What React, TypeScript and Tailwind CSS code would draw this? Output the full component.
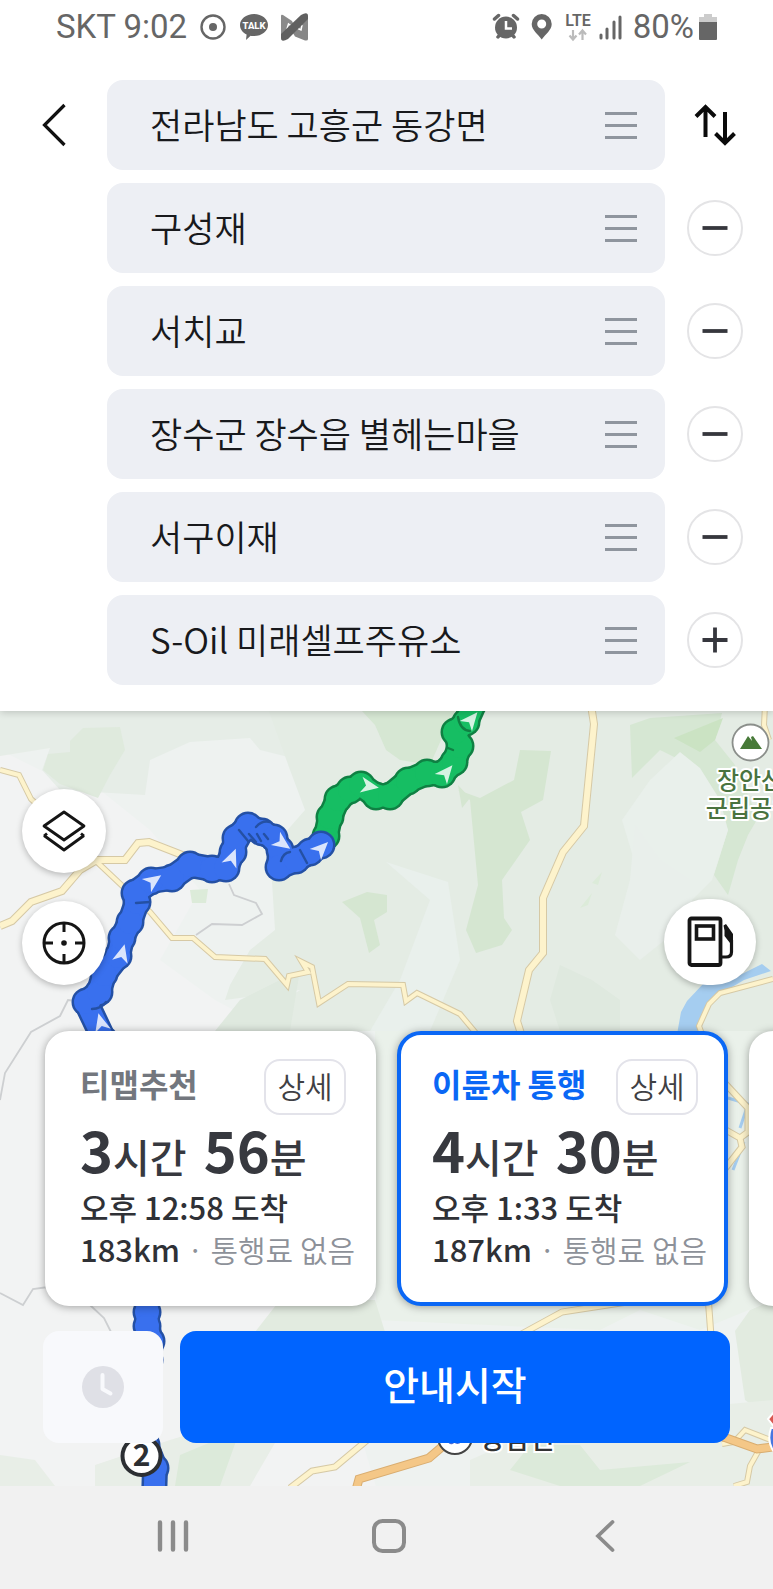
const font = "font-['Noto_Sans_CJK_KR','Noto_Sans',sans-serif]";

const stops = [
  "전라남도 고흥군 동강면",
  "구성재",
  "서치교",
  "장수군 장수읍 별헤는마을",
  "서구이재",
  "S-Oil 미래셀프주유소",
];

const routes = [
  { title: "티맵추천", hours: 3, minutes: 56, arrival: "오후 12:58 도착", distance: "183km", toll: "통행료 없음", selected: false },
  { title: "이륜차 통행", hours: 4, minutes: 30, arrival: "오후 1:33 도착", distance: "187km", toll: "통행료 없음", selected: true },
];

function StatusBar() {
  return (
    <div className="flex h-[54px] items-center justify-between pl-14 pr-[55px] font-[Roboto,sans-serif] text-[33px] leading-8 text-[#666]">
      <div className="flex items-center">
        <span>SKT 9:02</span>
        <svg className="ml-3" width="110" height="30" viewBox="198 11 110 30">
          <circle cx="212" cy="26" r="11.5" fill="none" stroke="#666" strokeWidth="2.4" />
          <circle cx="212" cy="26" r="4" fill="#666" />
          <path d="M253 13c8 0 14 5 14 11s-6 11-14 11c-1.400 0-2.200 0-3.400-.3L245 39l.6-5.500C241.500 31.500 239 28 239 24c0-6 6-11 14-11z" fill="#666" />
          <text x="253" y="28" textAnchor="middle" fontSize="9.500" fontWeight="800" fill="#fff">TALK</text>
          <path d="M280 15q0-2 2-1l9 6 3 6-6 6-8 4z" fill="#8a8a8a" />
          <path d="M307 16v22q0 2-3 1.500l-10-4-3-5 6-7z" fill="#868686" />
          <path d="M286 28l1.500-5 3 2 3.500-3.500M301 24l-1 5-3-1.500" fill="none" stroke="#fff" strokeWidth="1.500" />
          <path d="M280 33l20-19q7-4 7 1v3l-20 20q-7 4-7-1z" fill="#606060" />
        </svg>
      </div>
      <div className="flex items-center">
        <svg width="132" height="30" viewBox="494 11 132 30">
          <g stroke="#666" strokeWidth="3.500" strokeLinecap="round">
            <path d="M497.500 18l4-3.500M520.500 18l-4-3.500M501 36l2-2.500M517 36l-2-2.500" />
          </g>
          <circle cx="509" cy="26.500" r="11" fill="#666" />
          <path d="M509 20v7.500h6" fill="none" stroke="#fff" strokeWidth="2.500" />
          <path fillRule="evenodd" d="M544.700 13a10 10 0 0 1 10 10c0 6-6 10-10 15.500-4-5.500-10-9.500-10-15.500a10 10 0 0 1 10-10zm0 5.500a4.500 4.500 0 1 0 0 9 4.500 4.500 0 0 0 0-9z" fill="#666" />
          <text x="581" y="25" textAnchor="middle" fontSize="16" fontWeight="600" fill="#666">LTE</text>
          <path d="M576 29v9m-3.500-3.500l3.500 4 3.500-4M585.500 39v-9m-3.500 3.500l3.500-4 3.500 4" fill="none" stroke="#bbb" strokeWidth="2.200" />
          <path d="M604 34v3M610 28v9M617 21v16M623 16v21" stroke="#666" strokeWidth="3" strokeLinecap="round" />
        </svg>
        <span className="ml-2.5">80%</span>
        <svg className="ml-1" width="20" height="28" viewBox="0 0 20 28">
          <path d="M6 1h8v3h5v6H1V4h5z" fill="#ccc" />
          <path d="M1 9h18v17q0 1-1 1H2q-1 0-1-1z" fill="#666" />
        </svg>
      </div>
    </div>
  );
}

function StopRow({ name, index }: { name: string; index: number }) {
  const first = index === 0;
  const last = index === stops.length - 1;
  return (
    <li className="flex h-[90px] items-center">
      <div className="w-[107px] shrink-0">
        {first && (
          <button type="button" aria-label="뒤로" className="ml-[34px] flex h-14 w-10 items-center justify-center">
            <svg width="26" height="44" viewBox="0 0 26 44" fill="none" stroke="#111" strokeWidth="3.200">
              <path d="M23.500 2L3.500 22l20 20" />
            </svg>
          </button>
        )}
      </div>
      <div className="flex h-full min-w-0 flex-1 items-center rounded-2xl bg-[#edeff4] pl-[43px] pr-7">
        <input
          aria-label={`경유지 ${index + 1}`}
          defaultValue={name}
          className="h-full min-w-0 flex-1 bg-transparent pb-1 text-[35px] font-[350] text-[#18191c] outline-none"
        />
        <button type="button" aria-label="순서 변경" className="flex h-10 w-8 shrink-0 flex-col justify-center gap-[9px]">
          <span className="h-[3px] w-8 bg-[#8f959e]" />
          <span className="h-[3px] w-8 bg-[#8f959e]" />
          <span className="h-[3px] w-8 bg-[#8f959e]" />
        </button>
      </div>
      <div className="mr-2 flex w-[100px] shrink-0 justify-center">
        {first ? (
          <button type="button" aria-label="출발지 도착지 바꾸기">
            <svg width="42" height="42" viewBox="0 0 42 42" fill="none" stroke="#0b0b0b" strokeWidth="4">
              <path d="M11.500 33V3.500M2 12.500L11.500 3l9.500 9.500M31 8v29.500M21.500 29.500L31 39l9.500-9.500" />
            </svg>
          </button>
        ) : (
          <button
            type="button"
            aria-label={last ? "경유지 추가" : "경유지 삭제"}
            className="flex size-14 items-center justify-center rounded-full border-2 border-[#e4e4e6] bg-white"
          >
            <svg width="26" height="26" viewBox="0 0 26 26" stroke="#36373d" strokeWidth="3.800">
              <path d={last ? "M.5 13h25M13 .5v25" : "M.5 13h25"} />
            </svg>
          </button>
        )}
      </div>
    </li>
  );
}

const blueRoute = [
  [104, 1040], [86, 1002], [99, 992], [104, 974], [118, 956], [122, 938], [130, 922], [137, 902], [135, 893], [151, 881],
  [172, 878], [190, 865], [212, 869], [226, 868], [233, 852], [236, 838], [248, 826], [262, 832], [274, 838], [280, 850],
  [279, 867], [296, 860], [310, 852], [321, 845],
];
const greenRoute = [
  [326, 836], [330, 817], [338, 799], [350, 790], [361, 785], [376, 796], [390, 796], [408, 781], [427, 773], [442, 774],
  [454, 762], [460, 746], [455, 732], [466, 722], [476, 700],
];
const lowerRoute = [[147, 1290], [147, 1312], [147, 1326], [151, 1341], [149, 1360], [145, 1420], [146, 1445], [155, 1468], [154, 1500]];

const arrows = [
  [101, 1023, -15], [122, 954, 15], [153, 881, 55], [232, 858, 22], [282, 843, 125], [321, 849, 45],
  [369, 786, 100], [446, 773, 40], [471, 720, 40],
];

function Route({ points, fill, edge }: { points: number[][]; fill: string; edge: string }) {
  const line = points.map((p) => p.join(",")).join(" ");
  return (
    <g strokeLinejoin="round" strokeLinecap="round">
      <polyline points={line} fill="none" stroke={edge} strokeWidth="26" />
      {points.map(([x, y]) => <circle key={`${x}-${y}`} cx={x} cy={y} r="14.500" fill={edge} />)}
      <polyline points={line} fill="none" stroke={fill} strokeWidth="21" />
      {points.map(([x, y]) => <circle key={`${x}-${y}`} cx={x} cy={y} r="12" fill={fill} />)}
    </g>
  );
}

const yellowRoads = [
  { d: "M0 770L19 775L31 799L45 812", w: 4 },
  { d: "M0 926L12 921L31 902L62 891L80 870L97 860H125L138 843L149 842L190 858", w: 6 },
  { d: "M97 862L150 912L172 938H193L215 957L265 959L287 985L289 976L308 972L302 962L312 967L319 1003L348 984L403 985L406 1001L417 993L460 1014L480 1038", w: 4 },
  { d: "M591 705L594 724L584 826L563 852L543 898V953L529 970L517 1021L523 1040", w: 6 },
  { d: "M773 979L720 993L709 1004L699 1026L706 1045", w: 4 },
  { d: "M765 705L764 725L769 740", w: 4 },
  { d: "M720 1078L748 1108V1132L740 1138L724 1129M748 1132L773 1120M740 1138L742 1147L724 1170", w: 5 },
  { d: "M518 1336L562 1312L640 1300M708 1296L711 1336", w: 5 },
  { d: "M290 1488L312 1471L335 1467L372 1436", w: 5 },
  { d: "M722 1444L734 1442L745 1430L773 1441M759 1450L750 1466L747 1482L734 1486", w: 4 },
];

function MapCanvas() {
  return (
    <svg
      className="absolute inset-0 size-full"
      viewBox="0 711 773 775"
      preserveAspectRatio="xMidYMid slice"
      role="img"
      aria-label="경로 지도"
    >
      <rect x="-400" y="311" width="1600" height="1600" fill="#f2f3f3" />
      <path d="M0 700H773V1500H380L350 1400L300 1340L375 1250L330 1100L290 1040L215 1000L160 960L200 890L150 830L100 790L40 770L0 750z" fill="#eef2f0" />
      <path d="M0 700H285L300 760L260 750L250 738L190 742L150 760L145 795L60 790L42 770L50 748L0 756z" fill="#e6ede7" />
      <path d="M70 741L83 728L120 727L125 750L110 775L98 798L60 784L43 770L48 754L70 752z" fill="#dfeadd" />
      <path d="M265 700H773V1031H240L300 990L225 1000L230 985L250 950L275 930L270 850L305 810L290 770z" fill="#e4ece4" />
      <path d="M362 711H455L441 740L430 765L400 760L386 750L375 725z" fill="#d6e7d3" />
      <path d="M520 750L551 751L543 800L521 812L530 840L502 880L504 918L512 930L502 945L476 953L466 930L478 885L470 800L458 790L480 798L514 780z" fill="#d5e6d1" />
      <path d="M458 785L470 798L462 808zM342 902L367 892L387 895V912L374 920L380 945L369 953L360 918z" fill="#d5e6d1" />
      <path d="M630 725L650 718L722 713L715 740L735 765L758 818L748 835L738 860L728 895L714 875L728 830L700 770L660 750L632 778z" fill="#d6e7d3" />
      <path d="M674 738L723 718L715 740L700 752z" fill="#cbe3c3" />
      <path d="M622 820L650 780L680 752L700 768L720 800L728 830L712 880L692 900L696 940L670 930L640 880z" fill="#e9f0eb" />
      <path d="M386 862L448 882L460 960L430 1031H370L400 980L430 900z" fill="#e9f0ec" />
      <path d="M635 825L660 860L690 880V920L640 960L615 935L630 880z" fill="#e9efeb" />
      <path d="M240 1000L300 970L290 1031H215zM550 1000L560 965L592 980L620 1000V1031H560z" fill="#dfe9df" />
      <path d="M190 890L208 889L206 903H192zM592 883L602 872L598 885zM580 908L592 893L588 905z" fill="#dcebd9" />
      <path d="M375 1031H773V1300L700 1330L640 1310L600 1330L376 1320z" fill="#eaf1ea" />
      <path d="M280 1300H375L385 1332H255zM735 1331L750 1310L773 1300V1420L745 1400z" fill="#e2ebe0" />
      <path d="M0 1455L35 1460L55 1486H0zM95 1465L170 1440L300 1400L250 1486H95zM470 1460L560 1420L773 1400V1486H470z" fill="#e8eee7" />
      <path d="M180 1455L240 1430L220 1486H175zM510 1470L530 1445H580L600 1470L690 1462L640 1486H560z" fill="#dceada" />

      <g fill="none" stroke="#cdcfd1" strokeWidth="1.800">
        <path d="M229 884L234 895L256 903L262 914L242 925L212 924L196 935M76 1001L68 1000L60 1016L31 1032L5 1073L0 1100" />
        <path d="M0 1293L23 1305L33 1289L48 1287M90 1305L104 1318L112 1334" />
      </g>
      <path d="M676 1040L681 1012L687 1001L703 984L740 975L762 964L771 971L744 980L722 993L712 1003L703 1020L700 1040z" fill="#a5cdf0" />
      <path d="M728 1098L748 1104L740 1128M744 1142L733 1170" fill="none" stroke="#a5cdf0" strokeWidth="3" />
      {yellowRoads.map((r) => (
        <path key={r.d} d={r.d} fill="none" stroke="#d6c9a5" strokeWidth={r.w + 2} />
      ))}
      {yellowRoads.map((r) => (
        <path key={r.d} d={r.d} fill="none" stroke="#fdf3cc" strokeWidth={r.w} />
      ))}
      <path d="M356 1490L359 1479L429 1458L450 1440M715 1434L757 1449L773 1447" fill="none" stroke="#d9ad70" strokeWidth="9" />
      <path d="M356 1490L359 1479L429 1458L450 1440M715 1434L757 1449L773 1447" fill="none" stroke="#f4c787" strokeWidth="7" />

      <Route points={greenRoute} fill="#16be63" edge="#0f8043" />
      <Route points={blueRoute} fill="#3970ee" edge="#2450a4" />
      <Route points={lowerRoute} fill="#3970ee" edge="#2450a4" />
      <g fill="none" stroke="#2450a4" strokeWidth="2.400" strokeLinecap="round">
        <path d="M239 830L248 841M249 834L256 842M257 834L261 841M264 834L268 839M256 827Q262 820 270 822M281 861Q283 853 290 852M300 850L307 863M136 903L150 902M92 1009Q101 1009 106 1002" />
      </g>
      <path d="M458 717Q460 730 470 731M448 748L453 750" fill="none" stroke="#0f8043" strokeWidth="2.400" strokeLinecap="round" />
      {arrows.map(([x, y, angle]) => (
        <path key={x} d="M0-10L8 8L0 3L-8 8z" fill="#fff" fillOpacity=".82" transform={`translate(${x} ${y}) rotate(${angle})`} />
      ))}

      <circle cx="750.500" cy="742.500" r="18" fill="#fff" stroke="#8b8f8b" strokeWidth="1.800" />
      <path d="M740 749L748 736L752 741L751 737L753 736L762 749z" fill="#477a38" />
      <g fontSize="24" fontWeight="500" textAnchor="middle" fill="#49733f" stroke="#fff" strokeWidth="4" paintOrder="stroke" strokeLinejoin="round">
        <text x="750" y="789">장안산</text>
        <text x="750" y="817">군립공원</text>
      </g>
      <circle cx="455" cy="1437" r="17" fill="#fff" stroke="#444" strokeWidth="2" />
      <path d="M449 1442q3 3 5-1q3 4 7 0" fill="none" stroke="#4a6cd4" strokeWidth="2" />
      <text x="480" y="1449" fontSize="27" fontWeight="500" fill="#333" stroke="#fff" strokeWidth="4" paintOrder="stroke">장남면</text>
      <circle cx="141.500" cy="1456" r="19" fill="#fff" stroke="#2c2f33" strokeWidth="4" />
      <text x="141.500" y="1466" fontSize="30" fontWeight="700" textAnchor="middle" fill="#2c2f33">2</text>
      <path d="M768 1419L775 1411V1428z" fill="#d95750" stroke="#fff" strokeWidth="2" />
      <path d="M780 1428H771Q765 1446 780 1458z" fill="#4676e0" stroke="#fff" strokeWidth="2" />
    </svg>
  );
}

const roundButton = "flex items-center justify-center rounded-full bg-white shadow-[0_2px_6px_rgba(0,0,0,0.25)]";

function MapControls() {
  return (
    <div className="flex items-end justify-between pl-[22px] pr-[17px]">
      <div className="flex flex-col gap-7">
        <button type="button" aria-label="지도 레이어" className={`${roundButton} size-[84px]`}>
          <svg width="44" height="42" viewBox="0 0 44 42" fill="none" stroke="#151515" strokeWidth="2.800" strokeLinejoin="round">
            <path d="M22 2L42 16L22 30L2 16zM2 26L5 23.500M2 25.500L22 40L42 25.500M42 26L39 23.500" />
          </svg>
        </button>
        <button type="button" aria-label="현재 위치" className={`${roundButton} size-[84px]`}>
          <svg width="44" height="44" viewBox="0 0 44 44" fill="none" stroke="#151515" strokeWidth="3">
            <circle cx="22" cy="22" r="20" />
            <path d="M22 2v9M22 33v9M2 22h9M33 22h9" />
            <circle cx="22" cy="22" r="2.800" fill="#151515" stroke="none" />
          </svg>
        </button>
      </div>
      <button type="button" aria-label="주유소" className={`${roundButton} h-[86px] w-[92px]`}>
        <svg width="48" height="52" viewBox="0 0 48 52" fill="none" stroke="#151515">
          <rect x="3.500" y="2.500" width="31" height="46.500" rx="2" strokeWidth="3.800" />
          <rect x="10.500" y="10" width="17" height="13" strokeWidth="3.600" />
          <path d="M35 41h5q5.500 0 5.500-5V24" strokeWidth="3.200" />
          <path d="M37.500 9.500L40 8l7 10v9h-3l-5.500-7v-5.500z" fill="#151515" stroke="none" />
        </svg>
      </button>
    </div>
  );
}

function RouteCard({ route }: { route: (typeof routes)[number] }) {
  return (
    <li
      className={`h-[275px] w-[331px] shrink-0 rounded-3xl border-4 bg-white pl-[31px] pt-6 shadow-[0_1px_8px_rgba(0,0,0,0.35)] ${
        route.selected ? "border-[#0a67f5]" : "border-white"
      }`}
    >
      <div className="flex items-center justify-between pr-[26px]">
        <h2 className={`pb-2 text-[32px] leading-10 font-bold ${route.selected ? "text-[#0a67f5]" : "text-[#73777e]"}`}>
          {route.title}
        </h2>
        <button type="button" className="h-14 w-[82px] rounded-2xl border-2 border-[#e3e3ea] pb-1 text-[30px] leading-10 font-[350] text-[#3f4044]">
          상세
        </button>
      </div>
      <p className="mt-1 text-[40px] leading-[60px] font-medium text-[#37393f]">
        <b className="text-[56px] font-bold">{route.hours}</b>
        <span className="mr-2">시간</span> <b className="text-[56px] font-bold">{route.minutes}</b>분
      </p>
      <p className="text-[31px] leading-[42px] font-medium text-[#2f3136]">{route.arrival}</p>
      <p className="text-[31px] leading-[42px] font-medium whitespace-nowrap text-[#2f3136]">
        {route.distance} <span className="text-[30px] font-[350] text-[#8d9199]">· {route.toll}</span>
      </p>
    </li>
  );
}

function SystemNav() {
  return (
    <nav className="flex h-[103px] items-center justify-center gap-[168px] bg-[#f1f1f1] pb-1 pl-1">
      <button type="button" aria-label="최근 앱" className="flex w-12 justify-center">
        <svg width="32" height="32" viewBox="0 0 32 32" stroke="#8b8b8b" strokeWidth="4.400" strokeLinecap="round">
          <path d="M3 2.500v27M16 2.500v27M29 2.500v27" />
        </svg>
      </button>
      <button type="button" aria-label="홈" className="flex w-12 justify-center">
        <svg width="36" height="36" viewBox="0 0 36 36" fill="none" stroke="#8b8b8b" strokeWidth="4">
          <rect x="3" y="3" width="30" height="30" rx="8.500" />
        </svg>
      </button>
      <button type="button" aria-label="이전" className="flex w-12 justify-center">
        <svg width="20" height="34" viewBox="0 0 20 34" fill="none" stroke="#8b8b8b" strokeWidth="3.800" strokeLinecap="round">
          <path d="M17.500 3L3 17l14.500 14" />
        </svg>
      </button>
    </nav>
  );
}

export default function App() {
  return (
    <div className={`flex min-h-screen flex-col bg-white ${font}`}>
      <header className="relative z-10 bg-white pb-[26px] shadow-[0_1px_8px_rgba(0,0,0,0.2)]">
        <StatusBar />
        <ul className="mt-[26px] flex flex-col gap-[13px]">
          {stops.map((name, i) => (
            <StopRow key={name} name={name} index={i} />
          ))}
        </ul>
      </header>

      <main className="relative flex-1 overflow-hidden">
        <MapCanvas />
        <div className="relative pt-[78px] pb-[43px]">
          <MapControls />
          <ul className="mt-[46px] flex gap-[21px] pl-[45px]">
            {routes.map((route) => (
              <RouteCard key={route.title} route={route} />
            ))}
            <li className="h-[275px] w-[331px] shrink-0 rounded-3xl bg-white shadow-[0_1px_8px_rgba(0,0,0,0.35)]" />
          </ul>
          <div className="mt-[25px] flex gap-[17px] pr-[43px] pl-[43px]">
            <button type="button" aria-label="출발 시간" className="flex h-28 w-[120px] shrink-0 items-center justify-center rounded-2xl bg-[#f8f9fc]">
              <svg width="42" height="42" viewBox="0 0 42 42">
                <circle cx="21" cy="21" r="21" fill="#dfe0e6" />
                <path d="M20.500 9v14l8 4.500" fill="none" stroke="#f8f9fc" strokeWidth="4" strokeLinecap="round" strokeLinejoin="round" />
              </svg>
            </button>
            <button type="button" className="h-28 flex-1 rounded-2xl bg-[#0064ff] pb-2 text-[39px] font-medium text-white">
              안내시작
            </button>
          </div>
        </div>
      </main>
      <SystemNav />
    </div>
  );
}
